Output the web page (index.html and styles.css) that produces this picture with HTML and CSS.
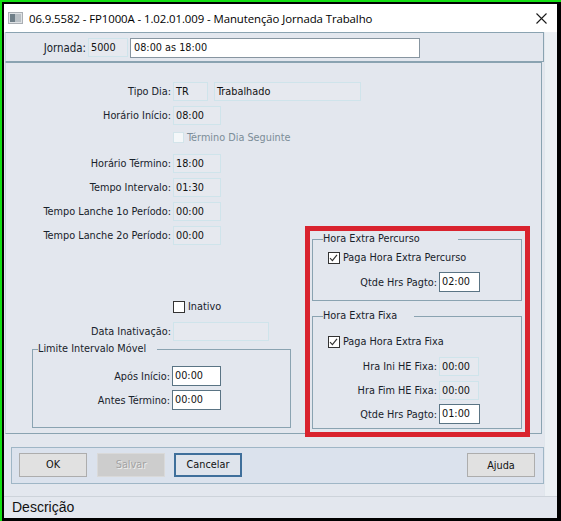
FILE: index.html
```html
<!DOCTYPE html>
<html lang="pt-BR">
<head>
<meta charset="utf-8">
<title>Manutenção Jornada Trabalho</title>
<link rel="stylesheet" href="styles.css">
</head>
<body>
<div class="screen">
  <div class="window">
    <div class="titlebar">
      <svg class="app-icon" width="15" height="12" viewBox="0 0 15 12">
        <rect x="0.5" y="0.5" width="14" height="11" fill="#dfe2e5" stroke="#a9aeb3"/>
        <rect x="2" y="2" width="5" height="8" fill="#6f7f88"/>
        <rect x="7" y="2" width="6" height="8" fill="#b9c0c5"/>
      </svg>
      <span class="title">06.9.5582 - FP1000A - 1.02.01.009 - Manutenção Jornada Trabalho</span>
      <svg class="close" width="11" height="11" viewBox="0 0 11 11">
        <path d="M0.5 0.5L10.5 10.5M10.5 0.5L0.5 10.5" stroke="#1a1a1a" stroke-width="1.1" fill="none"/>
      </svg>
    </div>

    <div class="client">
      <div class="content">
        <div class="header-panel">
          <span class="hdr-label">Jornada:</span>
          <div class="box ro code">5000</div>
          <div class="box text desc">08:00 as 18:00</div>
        </div>

        <div class="main-panel">
          <div class="col-left">
            <div class="field">
              <span class="lbl">Tipo Dia:</span>
              <div class="box ro w35">TR</div>
              <div class="box ro w147 gap6">Trabalhado</div>
            </div>
            <div class="field">
              <span class="lbl">Horário Início:</span>
              <div class="box ro w48">08:00</div>
            </div>
            <div class="field check disabled">
              <span class="cb"></span>
              <span class="cb-text">Término Dia Seguinte</span>
            </div>
            <div class="field">
              <span class="lbl">Horário Término:</span>
              <div class="box ro w48">18:00</div>
            </div>
            <div class="field">
              <span class="lbl">Tempo Intervalo:</span>
              <div class="box ro w48">01:30</div>
            </div>
            <div class="field">
              <span class="lbl">Tempo Lanche 1o Período:</span>
              <div class="box ro w48">00:00</div>
            </div>
            <div class="field">
              <span class="lbl">Tempo Lanche 2o Período:</span>
              <div class="box ro w48">00:00</div>
            </div>
            <div class="field check inativo">
              <span class="cb"></span>
              <span class="cb-text">Inativo</span>
            </div>
            <div class="field last">
              <span class="lbl">Data Inativação:</span>
              <div class="box ro w96"></div>
            </div>

            <fieldset class="group limite">
              <legend>Limite Intervalo Móvel</legend>
              <div class="field tall">
                <span class="lbl">Após Início:</span>
                <div class="box edit w49">00:00</div>
              </div>
              <div class="field tall">
                <span class="lbl">Antes Término:</span>
                <div class="box edit w49">00:00</div>
              </div>
            </fieldset>
          </div>

          <div class="col-right highlight">
            <fieldset class="group he percurso">
              <legend>Hora Extra Percurso</legend>
              <div class="field check">
                <span class="cb on"><svg width="12" height="12" viewBox="0 0 12 12"><path d="M2.2 6.2L4.8 8.8L9.8 2.6" stroke="#333" stroke-width="1.3" fill="none"/></svg></span>
                <span class="cb-text">Paga Hora Extra Percurso</span>
              </div>
              <div class="field tall qtde">
                <span class="lbl">Qtde Hrs Pagto:</span>
                <div class="box edit w41">02:00</div>
              </div>
            </fieldset>

            <fieldset class="group he fixa">
              <legend>Hora Extra Fixa</legend>
              <div class="field check">
                <span class="cb on"><svg width="12" height="12" viewBox="0 0 12 12"><path d="M2.2 6.2L4.8 8.8L9.8 2.6" stroke="#333" stroke-width="1.3" fill="none"/></svg></span>
                <span class="cb-text">Paga Hora Extra Fixa</span>
              </div>
              <div class="field ini">
                <span class="lbl">Hra Ini HE Fixa:</span>
                <div class="box ro w40">00:00</div>
              </div>
              <div class="field fim">
                <span class="lbl">Hra Fim HE Fixa:</span>
                <div class="box ro w40">00:00</div>
              </div>
              <div class="field tall qtde2">
                <span class="lbl">Qtde Hrs Pagto:</span>
                <div class="box edit w41">01:00</div>
              </div>
            </fieldset>
          </div>
        </div>

        <div class="button-panel">
          <button class="btn">OK</button>
          <button class="btn off" disabled>Salvar</button>
          <button class="btn focus">Cancelar</button>
          <button class="btn help">Ajuda</button>
        </div>
      </div>
      <div class="side-strip"></div>
    </div>

    <div class="statusbar">Descrição</div>
  </div>
</div>
</body>
</html>
```

FILE: styles.css
```css
* { box-sizing: border-box; }

html, body {
  margin: 0;
  padding: 0;
}

body {
  width: 561px;
  height: 521px;
  overflow: hidden;
  background: #000;
  font-family: "DejaVu Sans Condensed", "DejaVu Sans", sans-serif;
  font-size: 10.8px;
  color: #18222b;
}

/* outer frame: green edge on top/left, black border around the window */
.screen {
  width: 561px;
  height: 521px;
  border-top: 2px solid #14e014;
  border-left: 2px solid #14e014;
  background: #000;
  padding: 2px 4px 3px 2px;
}

.window {
  width: 553px;
  height: 514px;
  display: flex;
  flex-direction: column;
  background: #e3e7ee;
}

/* ---------- title bar ---------- */
.titlebar {
  height: 28px;
  flex: none;
  background: #fff;
  display: flex;
  align-items: center;
  padding: 0 10px 0 4px;
}

.app-icon { flex: none; }

.title {
  margin-left: 6px;
  font-family: "Open Sans", "Noto Sans", sans-serif;
  font-size: 11.4px;
  letter-spacing: -0.08px;
  color: #000;
  white-space: nowrap;
}

.close {
  margin-left: auto;
  flex: none;
}

/* ---------- client area ---------- */
.client {
  flex: 1;
  display: flex;
  min-height: 0;
}

.content {
  width: 540px;
  flex: none;
}

.side-strip {
  flex: 1;
  background: #ecf0f4;
  border-left: 1px solid #e0e6ec;
}

.header-panel {
  margin-left: 1px;
  width: 539px;
  height: 30px;
  border: 1px solid #8aa3b1;
  border-left-color: #c9d4dc;
  display: flex;
  align-items: center;
  padding: 1px 0 0 36px;
}

.hdr-label {
  width: 44px;
  text-align: right;
  margin-right: 2px;
  font-size: 11.4px;
}

.main-panel {
  margin-left: 1px;
  width: 537px;
  height: 372px;
  border: 1px solid #8aa3b1;
  border-left-color: #c9d4dc;
  display: flex;
  align-items: flex-start;
  padding-top: 19px;
}

.col-left {
  width: 300px;
  flex: none;
}

.col-right {
  width: 210px;
  flex: none;
  margin: 150px 0 0 6px;
}

/* red highlight frame around the overtime groups */
.highlight { position: relative; }
.highlight::after {
  content: "";
  position: absolute;
  left: -7px;
  top: -6px;
  right: -8px;
  bottom: -8px;
  border: 5px solid #d9232e;
  pointer-events: none;
}

/* ---------- form rows ---------- */
.field {
  display: flex;
  align-items: center;
  height: 19px;
  margin-bottom: 5px;
}

.field.tall { height: 20px; margin-bottom: 4px; }
.field.last { margin-bottom: 1px; }

.lbl {
  width: 165px;
  flex: none;
  text-align: right;
  margin-right: 2px;
  white-space: nowrap;
}

.box {
  height: 19px;
  border: 1px solid #cfe4eb;
  line-height: 17px;
  padding-left: 2px;
  color: #111;
  white-space: nowrap;
  overflow: hidden;
  flex: none;
}

.box.ro { background: #e6e9ef; }
.box.edit {
  height: 20px;
  line-height: 18px;
  background: #fff;
  border-color: #5a7484;
}
.box.text {
  height: 20px;
  line-height: 18px;
  background: #fff;
  border-color: #8795a0;
  padding-left: 3px;
}

.code { width: 40px; margin-right: 2px; padding-left: 2px; }
.desc { width: 290px; }

.w35 { width: 35px; }
.w40 { width: 40px; }
.w41 { width: 41px; }
.w48 { width: 48px; }
.w49 { width: 49px; }
.w96 { width: 96px; }
.w147 { width: 147px; }
.gap6 { margin-left: 6px; }

/* ---------- checkboxes ---------- */
.field.check {
  padding-left: 167px;
  height: 15px;
  margin-bottom: 9px;
}

.cb {
  width: 12px;
  height: 12px;
  flex: none;
  background: #fff;
  border: 1px solid #333;
  display: flex;
}
.cb svg { margin: -1px 0 0 -1px; }

.cb-text {
  margin-left: 3px;
  white-space: nowrap;
}

.field.disabled .cb {
  width: 11px;
  height: 11px;
  border-color: #d3e4ea;
  background: #f4f7f9;
}
.field.disabled .cb-text { color: #7c8d98; }

.field.inativo { margin-top: 54px; margin-bottom: 8px; }

/* ---------- group boxes ---------- */
.group {
  margin: 0;
  border: 1px solid #8aa3b1;
  min-width: 0;
}

.group legend {
  padding: 0;
  line-height: 14px;
  white-space: nowrap;
}

.limite {
  margin-left: 26px;
  width: 259px;
  padding: 10px 0 13px 0;
}
.limite legend { margin-left: 5px; padding-right: 11px; }
.limite .lbl { width: 137px; }

.he {
  width: 210px;
  padding: 0;
}
.he legend { margin-left: 10px; }
.percurso legend { padding-right: 38px; }
.fixa legend { padding-right: 17px; }

.he .field.check {
  height: 15px;
  padding-left: 15px;
  margin-bottom: 0;
}
.he .lbl { width: 124px; }

.percurso { padding: 4px 0 8px 0; }
.percurso .qtde { margin: 7px 0 0 0; }

.fixa { margin-top: 8px; padding: 11px 0 4px 0; }
.fixa .ini { margin: 8px 0 0 0; }
.fixa .fim { margin: 5px 0 0 0; }
.fixa .qtde2 { margin: 4px 0 0 0; }

/* ---------- buttons ---------- */
.button-panel {
  margin: 13px 0 0 7px;
  width: 533px;
  height: 37px;
  background: #dbe2ed;
  border: 1px solid #9fb6c6;
  display: flex;
  align-items: center;
  padding: 0 8px 2px 7px;
}

.btn {
  width: 68px;
  height: 24px;
  margin: 0 10px 0 0;
  padding: 0;
  background: #e1e1e1;
  border: 1px solid #adadad;
  font-family: "DejaVu Sans Condensed", "DejaVu Sans", sans-serif;
  font-size: 10.8px;
  color: #111;
}

.btn.off {
  margin-right: 9px;
  background: #cdcdcd;
  border-color: #d9d9d9;
  color: #a3a3a3;
  text-shadow: 1px 1px 0 #eee;
}

.btn.focus {
  background: #dfe4ec;
  border: 2px solid #3f6f9b;
}

.btn.help {
  margin: 1px 0 0 auto;
}

/* ---------- status bar ---------- */
.statusbar {
  height: 22px;
  flex: none;
  border-top: 1px solid #cdd3da;
  padding: 0 0 0 8px;
  font-family: "Liberation Sans", Arial, sans-serif;
  font-size: 14px;
  line-height: 20px;
  color: #111;
}
```
